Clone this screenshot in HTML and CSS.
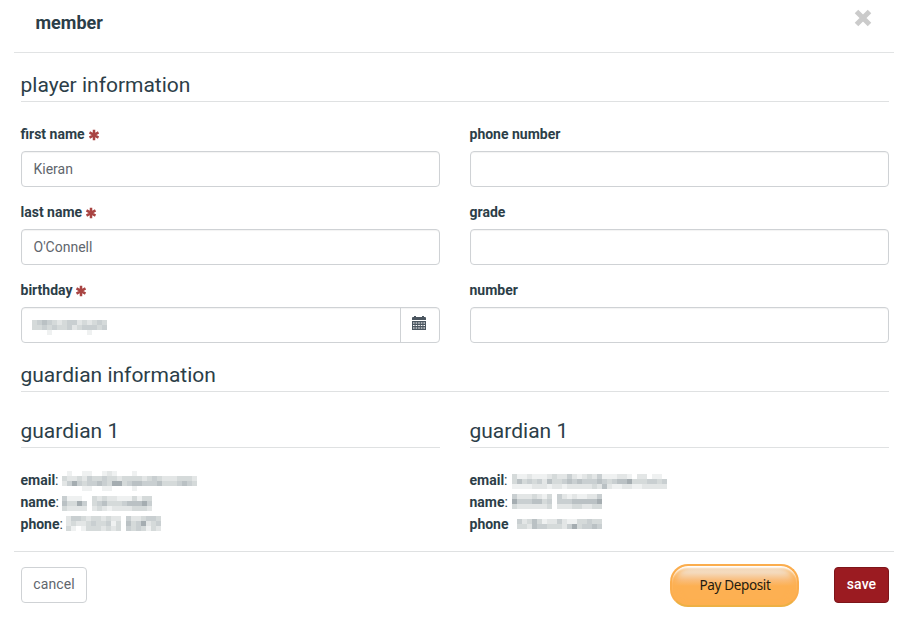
FILE: index.html
```html
<!DOCTYPE html>
<html lang="en">
<head>
<meta charset="utf-8">
<title>member</title>
<link rel="stylesheet" href="styles.css">
</head>
<body>
<svg width="0" height="0" class="defs">
  <symbol id="star" viewBox="0 0 12 12"><path d="M6 .8v10.4M1.5 3.4l9 5.2M1.5 8.6l9-5.2" stroke="currentColor" stroke-width="2.5"/></symbol>
</svg>
<div class="modal">
  <header class="head">
    <h1>member</h1>
    <svg class="close" viewBox="0 0 18 18"><path d="M2.5 2.5l13 13M15.5 2.5l-13 13" stroke="#cbcbcb" stroke-width="5"/></svg>
  </header>
  <main class="body">
    <h2>player information</h2>
    <div class="grid fields">
      <div class="field"><label>first name <svg class="req"><use href="#star"/></svg></label><div class="input">Kieran</div></div>
      <div class="field"><label>phone number</label><div class="input"></div></div>
      <div class="field"><label>last name <svg class="req"><use href="#star"/></svg></label><div class="input">O'Connell</div></div>
      <div class="field"><label>grade</label><div class="input"></div></div>
      <div class="field"><label>birthday <svg class="req"><use href="#star"/></svg></label>
        <div class="input date"><span class="value"><svg class="mosaic" data-rows="345432344232343|334343342344434|000100000001000"></svg></span>
          <span class="addon"><svg width="14" height="14" viewBox="0 0 14 14"><path fill="#4b5660" d="M0 4V2q0-1 1-1h1V0h2v1h6V0h2v1h1q1 0 1 1v2zM0 5h14v9H0z"/><path stroke="#fff" stroke-width="1.2" stroke-dasharray="1.6 1" d="M1 7h12M1 9.5h12M1 12h12"/></svg></span></div></div>
      <div class="field"><label>number</label><div class="input"></div></div>
    </div>
    <h2>guardian information</h2>
    <div class="grid guardians">
      <section>
        <h2>guardian 1</h2>
        <div class="row"><span><b>email</b>:</span><svg class="mosaic le" data-rows="010011001210001000000000000|322324334332333323432223332|246434454366345544453334543|000011001100001000000000000"></svg></div>
        <div class="row"><span><b>name</b>:</span><svg class="mosaic ln" data-rows="000000000000000000|411100323221113133|533640345333455564|322220232122223332"></svg></div>
        <div class="row"><span><b>phone</b>:</span><svg class="mosaic lp" data-rows="0000000000000000000|2443233232204223443|2322343341305346234|3101333232304343132"></svg></div>
      </section>
      <section>
        <h2>guardian 1</h2>
        <div class="row"><span><b>email</b>:</span><svg class="mosaic re" data-rows="0000000000000000000000000000000|3112111232242123241112210220110|3534342533454544454345563334434|1111222122122222325211221122222"></svg></div>
        <div class="row"><span><b>name</b>:</span><svg class="mosaic rn" data-rows="000000000000000000|422232130421211224|644455340444555556|322222230222332233"></svg></div>
        <div class="row"><span><b>phone</b></span><svg class="mosaic rp" data-rows="00000000000000000|42353122421133433|33254433324634454"></svg></div>
      </section>
    </div>
  </main>
  <footer class="foot">
    <button class="btn">cancel</button>
    <button class="pay">Pay Deposit</button>
    <button class="btn save">save</button>
  </footer>
</div>
<script src="mosaic.js"></script>
</body>
</html>
```
FILE: styles.css
```css
* { box-sizing: border-box; }
body { margin: 0; background: #fff; color: #2c3e48; font: 14px/20px Roboto, sans-serif; }
.defs { position: absolute; }
.modal { width: 880px; height: 617px; margin-left: 14px; overflow: hidden; }
.head { height: 53px; padding: 9px 22px 0; border-bottom: 1px solid #e1e3e4; display: flex; justify-content: space-between; align-items: flex-start; }
h1 { margin: 0 0 0 -.5px; font-size: 18px; line-height: 27px; font-weight: 700; }
.close { width: 18px; height: 18px; }
.body { height: 498px; padding: 17px 5px 0 7px; }
h2 { margin: 0; height: 32px; font-size: 21px; line-height: 30px; font-weight: 400; text-indent: -.5px; border-bottom: 1px solid #dfe1e2; }
.grid { display: grid; grid-template-columns: 419px 419px; column-gap: 30px; }
.fields { padding-top: 22px; row-gap: 15px; margin-bottom: 17px; }
.field { height: 63px; }
label { display: flex; align-items: center; height: 20px; font-weight: 700; margin-left: -.5px; }
.req { width: 12px; height: 12px; margin: 1px 0 0 3px; color: #a94442; }
.input { height: 36px; margin-top: 7px; border: 1px solid #cfd2d5; border-radius: 4px; padding: 0 11.5px; line-height: 34px; color: #5f666d; box-shadow: inset 0 1px 1px rgba(0,0,0,.05); }
.date { display: flex; padding: 0; }
.value { flex: 1; padding: 12px 0 0 10px; line-height: 0; }
.addon { width: 39px; border-left: 1px solid #cfd2d5; line-height: 0; padding: 8px 0 0 11px; }
.guardians { padding-top: 24px; }
.guardians h2 { margin-bottom: 21px; }
.row { display: flex; align-items: flex-start; height: 22px; line-height: 22px; }
.row span { width: 42px; white-space: nowrap; text-indent: -.5px; }
.row b { font-weight: 700; }
.mosaic { display: block; flex: none; }
.le { margin: 2px 0 0 -1px; }
.ln { margin-left: -1px; }
.lp { margin: -2px 0 0 3px; }
.rn { margin-top: -2px; }
.rp { margin: 1px 0 0 5px; }
.foot { border-top: 1px solid #dfe1e2; padding: 12px 5px 0 7px; display: flex; align-items: flex-start; }
button { font-family: inherit; font-size: 14px; padding: 0; }
.btn { width: 66px; height: 36px; margin-top: 3px; border: 1px solid #cfd2d5; border-radius: 4px; background: #fff; color: #5f666d; letter-spacing: .1px; padding-bottom: 2px; }
.pay { width: 129px; height: 43px; margin-left: auto; border: 2px solid #fbad4d; border-bottom-color: #edb044; border-radius: 18px; background: linear-gradient(#f3e0cd 0, #f4d9bb 7px, #f9bd7c 14px, #fdb052 20px); box-shadow: inset 0 3px 2px -1px #fff, inset 6px 0 6px -2px #fdb052, inset -6px 0 6px -2px #fdb052; color: #241b10; font: 13.5px "Noto Sans", sans-serif; letter-spacing: -.35px; padding: 0 0 2px 1px; }
.save { width: 55px; margin-left: 35px; background: #9b1b21; border-color: #7d151a; color: #fff; font-weight: 500; }
```
FILE: mosaic.js
```js
// Fills each censored value with 5px blocks; digits are darkness levels.
const shades = ["", "#eff1f1", "#e3e6e6", "#d5dada", "#c9cfd1", "#bac1c4", "#a5adb1"];
document.querySelectorAll(".mosaic").forEach((svg) => {
  const rows = svg.dataset.rows.split("|");
  svg.setAttribute("width", rows[0].length * 5);
  svg.setAttribute("height", rows.length * 5);
  rows.forEach((row, y) => [...row].forEach((level, x) => {
    if (level === "0") return;
    const block = document.createElementNS("http://www.w3.org/2000/svg", "rect");
    block.setAttribute("x", x * 5);
    block.setAttribute("y", y * 5);
    block.setAttribute("width", 5);
    block.setAttribute("height", 5);
    block.setAttribute("fill", shades[level]);
    svg.append(block);
  }));
});
```
